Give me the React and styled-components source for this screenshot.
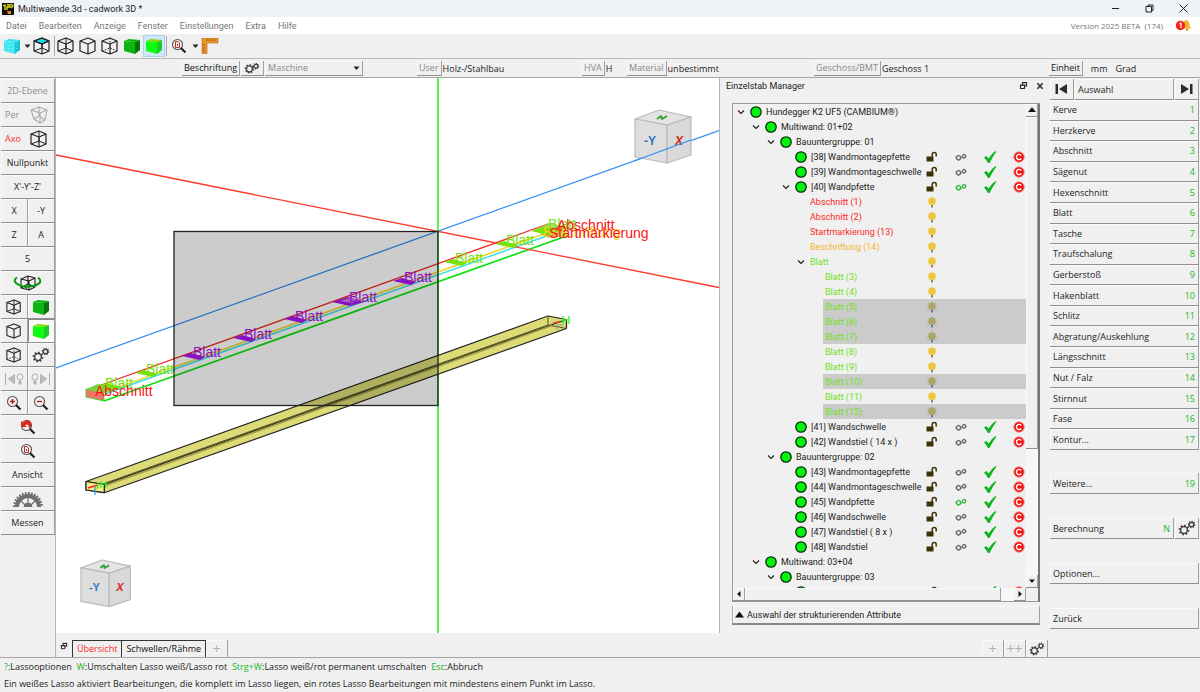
import React from 'react';
import styled, { createGlobalStyle, css } from 'styled-components';

const GREEN = '#12b81c';
const RED = '#fb2a1e';
const LIME = '#6fe01c';
const AMBER = '#f2b731';
const UI = '"Open Sans", "Noto Sans", sans-serif';
const NATIVE = 'Roboto, "Open Sans", sans-serif';

const Global = createGlobalStyle`
  * { box-sizing: border-box; }
  body { margin: 0; background: #f0f0f0; color: #1c1c1c; font: 9px/14px ${UI}; }
  button, select { font: inherit; color: inherit; margin: 0; padding: 0; border: 0; background: none; border-radius: 0; }
  ul { list-style: none; margin: 0; padding: 0; }
  svg { display: block; flex: none; }
  h2, p { margin: 0; font: inherit; }
`;

/* ---------- icons ---------- */

const box = 'M1 4 9 1l7 3v10l-7 3-8-3z';

const Cube = ({ kind = 'plain', size = 18, color = '#222' }) => (
  <svg width={size} height={size} viewBox="0 0 18 18" fill="none" stroke={color} strokeWidth="1.2" strokeLinejoin="round">
    {kind === 'top' && <path d="M1 4 9 1l7 3-7 3z" fill="#19d8ee" />}
    <path d={box} />
    <path d="M1 4l8 3 7-3M9 7v10" />
    {kind === 'wire' && <path d="M9 1v10M1 14l8-3 7 3" strokeWidth="1" />}
    {kind === 'top' && <path d="M9 7v4M1 14l8-3 7 3" strokeWidth="1" />}
    {kind === 'dash' && <path d="M9 1v10M1 14l8-3 7 3" strokeWidth="1" strokeDasharray="1.5 1.5" />}
  </svg>
);

const Perspective = () => (
  <svg width="18" height="18" viewBox="0 0 18 18" fill="none" stroke="#aaa" strokeWidth="1.1" strokeLinejoin="round">
    <path d="M1 4l8-3 8 3-2 10-5 3-6-4zM1 4l9 3 7-3M10 7v10M9 1v9M4 13l5-3 6 4" />
  </svg>
);

const Solid = ({ tone = 'light' }) => {
  const [top, front, side] = {
    light: ['#8fd800', '#0cff10', '#20c828'],
    dark: ['#0bb40f', '#0bb40f', '#087a0c'],
    cyan: ['#35e4ee', '#3fe6ef', '#16c3d6'],
  }[tone];
  return (
    <svg width="18" height="18" viewBox="0 0 18 18">
      <path d="M1 4l5-2 11 1-5 2z" fill={top} />
      <path d="M1 4l11 1v12L1 14z" fill={front} />
      <path d="M12 5l5-2v10l-5 4z" fill={side} />
      {tone === 'cyan' && <path d="M3 5v9M6 5v10M9 5v11M14 5v10" stroke="#8feff5" strokeDasharray="1 2" />}
      {tone === 'dark' && <path d="M13 7l4-2M13 10l4-2M13 13l4-2" stroke="#055a08" strokeDasharray="1 1" />}
    </svg>
  );
};

const teeth = (cx, cy, r) =>
  Array.from({ length: 8 }, (_, i) => {
    const a = (i * Math.PI) / 4 + 0.2;
    return `M${cx + r * Math.cos(a)} ${cy + r * Math.sin(a)}L${cx + (r + 1.8) * Math.cos(a)} ${cy + (r + 1.8) * Math.sin(a)}`;
  }).join('');

const Gears = ({ width = 18, height = 16, flat }) => (
  <svg width={width} height={height} viewBox="0 0 18 16" fill="none" stroke="#444">
    <circle cx="6" cy={flat ? 9 : 10} r="3.4" strokeWidth="1.5" />
    <path d={teeth(6, flat ? 9 : 10, 3.6)} strokeWidth="1.7" />
    <circle cx="13.5" cy={flat ? 6 : 4.5} r="2.2" strokeWidth="1.3" />
    <path d={teeth(13.5, flat ? 6 : 4.5, 2)} strokeWidth="1.3" />
  </svg>
);

const Lens = ({ kind }) => (
  <svg width="16" height="16" viewBox="0 0 16 16" fill="none">
    <circle cx="6.5" cy="6.5" r="5" fill="#f6eeee" stroke="#555" strokeWidth="1.1" />
    <path d="M10 10l4.5 4.5" stroke="#222" strokeWidth="2.2" />
    {kind === 'plus' && <path d="M4 6.5h5M6.5 4v5" stroke="#a22" strokeWidth="1.4" />}
    {kind === 'minus' && <path d="M4 6.5h5" stroke="#a22" strokeWidth="1.4" />}
    {kind === 'page' && <path d="M4.500 3.500h2.500l1.500 1.500v4.500h-4zM6.500 6v2" stroke="#b2332b" />}
    {kind === 'back' && <path d="M1 2v6h6L5 6.300q4-2.500 4 4.200 4-5 1-8.500-3-2.500-7 1.800z" fill="#d8291c" />}
  </svg>
);

const Caret = () => (
  <svg width="7" height="5" viewBox="0 0 7 5"><path d="M.5.5h6l-3 3.500z" fill="#222" /></svg>
);

const Ruler = () => (
  <svg width="18" height="16" viewBox="0 0 18 16">
    <path d="M1 0h16v5H6v11H1z" fill="#e8962a" stroke="#b06a14" strokeWidth=".6" />
    <path d="M6 1v2M8.500 1v2M11 1v2M13.500 1v2M2 7h2M2 10h2M2 13h2" stroke="#7a4708" strokeWidth=".8" />
  </svg>
);

const Rotate = () => (
  <svg width="30" height="18" viewBox="0 0 30 18" fill="none">
    <g stroke="#222" strokeWidth="1.1" strokeLinejoin="round">
      <path d="M8 5l7-3 7 2v9l-6 3-8-2zM8 5l8 2 6-3M16 7v9M15 2v8l-7 4M15 10l7 3" />
    </g>
    <path d="M4 3.500Q0 6 3 9q5 4 12 3.500 8 0 12-4 1-3-2-5" stroke="#0b9a14" strokeWidth="2" />
    <path d="M14 9.500l-4 3 4.500 3z" fill="#0b9a14" />
  </svg>
);

const Step = ({ flip }) => (
  <svg width="20" height="14" viewBox="0 0 20 14" fill="#bdbdbd" stroke="#b0b0b0">
    {flip ? (
      <>
        <circle cx="4" cy="5" r="3" fill="none" /><path d="M3 9h2v3H3z" />
        <path d="M9.500 2.500l6 4.500-6 4.500z" /><path d="M18.500 1v12" />
      </>
    ) : (
      <>
        <path d="M1.500 1v12" /><path d="M10.500 2.500l-6 4.500 6 4.500z" />
        <circle cx="16" cy="5" r="3" fill="none" /><path d="M15 9h2v3h-2z" />
      </>
    )}
  </svg>
);

const Saw = () => {
  const t = Array.from({ length: 15 }, (_, i) => {
    const a = Math.PI + (i * Math.PI) / 14;
    return `M${16 + 11 * Math.cos(a)} ${16 + 11 * Math.sin(a)}L${16 + 15 * Math.cos(a + 0.08)} ${16 + 15 * Math.sin(a + 0.08)}`;
  }).join('');
  return (
    <svg width="32" height="16" viewBox="0 0 32 16" fill="none" stroke="#707070">
      <path d="M5 16a11 11 0 0 1 22 0" strokeWidth="4" />
      <path d={t} strokeWidth="1.800" />
      <path d="M16 14V5M14 15L8 9M18 15l6-6" strokeWidth="1.200" />
      <path d="M12 16a4 4 0 0 1 8 0z" fill="#707070" />
    </svg>
  );
};

const Skip = ({ flip }) => (
  <svg width="13" height="12" viewBox="0 0 13 12" fill="#2d2d2d">
    {flip ? <path d="M1 1l8 5-8 5zM10 1h2.500v10H10z" /> : <path d="M12 1L4 6l8 5zM.5 1H3v10H.5z" />}
  </svg>
);

const WindowIcon = ({ kind, size = 9 }) => (
  <svg width={size} height={size} viewBox="0 0 9 9" fill="none" stroke="#222">
    {kind === 'min' && <path d="M1 4.500h7" />}
    {kind === 'max' && <path d="M1 2.500h5.500V8H1zM3 2.500V1h5v5.500H6.500" />}
    {kind === 'close' && <path d="M.5.5l8 8M8.500.5l-8 8" />}
    {kind === 'float' && <path d="M1.500 4h4v3.500h-4zM1 4.200h5M3.500 4V1.500h4V5H6M3 1.700h5" strokeWidth="1.100" />}
    {kind === 'x' && <path d="M1.500 1.500l6 6M7.500 1.500l-6 6" strokeWidth="1.600" />}
  </svg>
);

const AppLogo = () => (
  <svg width="12" height="12" viewBox="0 0 12 12">
    <path d="M0 0h12v12H0z" fill="#14140c" />
    <path d="M1 3l2-1v5M5 2h3v2H5v3M9 1l2 2-2 2" stroke="#dfe01a" strokeWidth="1.300" fill="none" />
    <path d="M5 8h4v3H6z" fill="#e9822c" />
  </svg>
);

const Bell = () => (
  <svg width="18" height="13" viewBox="0 0 18 13">
    <path d="M11 1q4 1 3.500 6l2 2.500H9V2z" fill="#f0b52c" /><circle cx="12" cy="10.500" r="1.300" fill="#d99a1c" />
    <circle cx="5.500" cy="6.500" r="4.700" fill="#f1251c" />
    <path d="M4.500 5l1.500-1v5" stroke="#fff" fill="none" strokeWidth="1.200" />
  </svg>
);

const Chevron = () => (
  <svg width="8" height="8" viewBox="0 0 8 8" fill="none"><path d="M1 2.500l3 3 3-3" stroke="#222" strokeWidth="1.200" /></svg>
);

const Dot = () => (
  <svg width="12" height="12" viewBox="0 0 12 12"><circle cx="6" cy="6" r="5.200" fill="#00f50a" stroke="#0b2b0b" strokeWidth="1.300" /></svg>
);

const Lock = () => (
  <svg width="14" height="14" viewBox="0 0 14 14">
    <path d="M1.500 6.500h7v5h-7z" fill="#3b3306" />
    <path d="M7.200 7V4.500q0-2 2-2t2 2V6.500" fill="none" stroke="#3b3306" strokeWidth="1.500" />
  </svg>
);

const Links = ({ color }) => (
  <svg width="14" height="14" viewBox="0 0 14 14" fill="none" stroke={color} strokeWidth="1.300">
    <circle cx="4.500" cy="7.800" r="2.100" /><circle cx="10" cy="6.300" r="1.700" />
    <path d="M1.300 7.800h1M4.500 10v1M4.500 4.700v1M6.700 8.500l1.300-.8M11.700 6.300h.8M10 3.700v1" strokeWidth=".8" />
  </svg>
);

const Check = () => (
  <svg width="14" height="14" viewBox="0 0 14 14"><path d="M1 7.500l2.300-1.500 2.400 2.500Q8 4 12.500 1l.8.8Q9.500 7 6.500 13H5Q3.500 10 1 7.500z" fill="#0fb51c" /></svg>
);

const Copy = () => (
  <svg width="14" height="14" viewBox="0 0 14 14" fill="none">
    <circle cx="7" cy="7" r="5.300" fill="#f51414" stroke="#fb9a9a" strokeWidth=".8" />
    <path d="M9.200 5.500a2.600 2.600 0 1 0 0 3" stroke="#fff" strokeWidth="1.400" />
  </svg>
);

const Bulb = ({ off }) => (
  <svg width="14" height="14" viewBox="0 0 14 14">
    <path d="M7 1v11M2 6.500h10M3 2.500l8 8M11 2.500l-8 8" stroke={off ? '#b0a88a' : '#f5d998'} />
    <circle cx="7" cy="6.300" r="3.700" fill={off ? '#aba76a' : '#ecc63c'} />
    <path d="M6 10h2v2.500H6z" fill={off ? '#6474a8' : '#8a8578'} />
  </svg>
);

/* ---------- frame ---------- */

const Page = styled.div`
  display: flex;
  flex-direction: column;
  height: 100vh;
  min-height: 640px;
`;

const TitleBar = styled.header`
  display: flex;
  align-items: center;
  gap: 4px;
  height: 17px;
  padding: 0 2px 0 2px;
  background: #eef3f7;
  font-family: ${NATIVE};
  span { flex: 1; }
`;

const WindowButton = styled.button`
  display: grid;
  place-items: center;
  width: 30px;
  height: 16px;
`;

const MenuBar = styled.nav`
  display: flex;
  align-items: center;
  gap: 12px;
  height: 17px;
  padding: 0 7px 0 6px;
  background: #fff;
  color: #777;
  font-family: ${NATIVE};
`;

const MenuButton = styled.button``;

const Version = styled.span`
  margin-left: auto;
  font-family: ${UI};
  font-size: 8px;
`;

const ToolBar = styled.div`
  display: flex;
  align-items: center;
  height: 25px;
  padding-left: 1px;
  border-bottom: 1px solid #b9b9b9;
`;

const Tool = styled.button`
  display: grid;
  place-items: center;
  width: ${(p) => (p.$narrow ? 8 : p.$wide ? 24 : 22)}px;
  height: 22px;
  ${(p) => p.$on && css`background: #cde8fa; box-shadow: inset 0 0 0 1px #a8d4f2;`}
`;

const Divider = styled.i`
  width: 1px;
  height: 20px;
  margin-left: 1px;
  background: #aaa;
`;

const Attributes = styled.div`
  display: grid;
  grid-template-columns: 182fr 235fr 165fr 45fr 187fr 235fr 151fr;
  align-items: center;
  height: 19px;
  padding-top: 1px;
  border-bottom: 1px solid #a5a5a5;
`;

const Attribute = styled.div`
  display: flex;
  align-items: center;
  gap: ${(p) => p.$gap || 1}px;
  white-space: nowrap;
`;

const raised = css`
  border-right: 1px solid #a0a0a0;
  border-bottom: 1px solid #909090;
  box-shadow: inset 1px 1px #f9f9f9;
`;

const Chip = styled.button`
  ${raised}
  display: grid;
  place-items: center;
  height: 15px;
  padding: 0 2px;
  color: ${(p) => (p.$dim ? '#8b8b8b' : '#111')};
`;

const SelectBox = styled.div`
  position: relative;
  width: 98px;
  svg { position: absolute; right: 3px; top: 5px; pointer-events: none; }
`;

const Select = styled.select`
  ${raised}
  appearance: none;
  width: 100%;
  height: 15px;
  padding-left: 3px;
  color: #8b8b8b;
`;

const Main = styled.main`
  display: flex;
  flex: 1;
  min-height: 0;
  border-bottom: 1px solid #a5a5a5;
`;

const Center = styled.div`
  display: flex;
  flex-direction: column;
  flex: 1;
  min-width: 0;
`;

const Work = styled.div`
  display: flex;
  flex: 1;
  min-height: 0;
`;

/* ---------- left tools ---------- */

const Side = styled.aside`
  display: grid;
  grid-template-columns: 27px 27px;
  grid-auto-rows: 24px;
  width: 56px;
  padding: 1px 1px 0;
  border-right: 1px solid #b5b5b5;
`;

const SideButton = styled.button`
  ${raised}
  display: flex;
  align-items: center;
  justify-content: ${(p) => (p.$spread ? 'space-between' : 'center')};
  ${(p) => p.$wide && css`grid-column: span 2;`}
  ${(p) => p.$spread && css`padding: 0 6px 0 4px;`}
  ${(p) => p.$on && css`background: #fafafa; box-shadow: inset 1px 1px #888;`}
  color: ${(p) => p.$color || '#222'};
`;

/* ---------- scene ---------- */

const Scene = styled.div`
  flex: 1;
  min-width: 0;
  overflow: hidden;
  background: #fff;
  border-right: 1px solid #b5b5b5;
  svg { width: 100%; height: 100%; }
`;

const Label3D = styled.text`
  font: 14px "Liberation Sans", Arial, sans-serif;
`;

const AxisLabel = styled.text`
  font-family: "Liberation Sans Narrow", "Liberation Sans", sans-serif;
  font-weight: 700;
  stroke: none;
`;

const PURPLE = '#8a10c4';
const TAG = '#77e010';

const tags = [
  [98, 386, TAG], [135, 373, TAG], [182, 356, PURPLE], [233, 338, PURPLE], [284, 319, PURPLE],
  [332, 302, PURPLE, true], [393, 281, PURPLE], [444, 262, TAG], [495, 244, TAG], [531, 231, TAG, true],
];

const labels = [
  [105, 388, TAG], [146, 374, TAG], [193, 357, PURPLE], [244, 339, PURPLE], [295, 321, PURPLE],
  [349, 302, PURPLE], [404, 282, PURPLE], [455, 263, TAG], [506, 245, TAG], [548, 229, TAG],
];

const ViewCube = ({ x, y, s }) => {
  const p = (list) => list.map(([a, b]) => `${x + a * s},${y + b * s}`).join(' ');
  return (
    <g stroke="#b9b9b9" strokeWidth="1.200" strokeLinejoin="round">
      <polygon points={p([[0, 9], [24, 0], [56, 7], [32, 15]])} fill="#e4e4e4" />
      <polygon points={p([[0, 9], [32, 15], [32, 53], [0, 47]])} fill="#dedede" />
      <polygon points={p([[32, 15], [56, 7], [56, 45], [32, 53]])} fill="#d9d9d9" />
      <polyline points={p([[22, 9], [26, 6], [27, 9], [32, 6]])} fill="none" stroke="#3ba03b" strokeWidth="2" />
      <AxisLabel x={x + 9 * s} y={y + 35 * s} fontSize={Math.round(12 * s)} fill="#2f78c4">-Y</AxisLabel>
      <AxisLabel x={x + 40 * s} y={y + 35 * s} fontSize={Math.round(12 * s)} fontStyle="italic" fill="#d0281c">X</AxisLabel>
    </g>
  );
};

const SceneView = () => (
  <Scene>
    <svg viewBox="56 78 663 555" preserveAspectRatio="xMinYMin slice" role="img" aria-label="3D-Ansicht">
      <path d="M438 78v560" stroke="#3cf53c" strokeWidth="1.800" />
      <g strokeLinejoin="round">
        <path d="M86 481.500L548 316l18.500 3.500v9L104.300 492.700 86 490z" fill="#dcdb78" stroke="#222" strokeWidth="1.200" />
        <path d="M86 490l462-165 18.500 3.500M548 316v9" stroke="#55552a" fill="none" strokeWidth="1" />
        <path d="M104.300 484.500L566.500 319.500M86 481.500l18.300 3v8" stroke="#222" fill="none" strokeWidth="1.200" />
        <path d="M100 487.500L552 325.500" stroke="#a09e42" strokeWidth="1.600" />
        <path d="M86 481.500l18.300 3v8.200L86 490z" fill="#f1ed8c" stroke="#222" strokeWidth="1.200" />
        <path d="M88 488l10-3" stroke="#fb2a1e" strokeWidth="1.500" />
        <path d="M95 487v8" stroke="#2a8df5" strokeWidth="1.200" />
        <path d="M98 483v5h-3M101 481v7M106 481v7M101 484h5" stroke="#2cf52c" strokeWidth="1.200" fill="none" />
        <path d="M563 316v8M569 316v8M563 320h6" stroke="#2cf52c" strokeWidth="1.300" />
        <path d="M553 323l7-1.500" stroke="#f0501e" strokeWidth="1.500" />
        <path d="M557 325v5M557 325h6" stroke="#999" />
      </g>
      <path d="M86 390.500L548 224" stroke="#f02a1e" strokeWidth="1.300" />
      <path d="M105 392L545 233.500" stroke="#f0d838" strokeWidth="1.800" />
      <path d="M105 394L548 235.500" stroke="#30e0ea" strokeWidth="1.400" />
      <path d="M104 401L568 235.500" stroke="#0ce010" strokeWidth="1.700" />
      <path d="M56 155L719 287.500" stroke="#fb3a2a" strokeWidth="1.300" />
      <path d="M56 368L719 130.500" stroke="#2f8ff0" strokeWidth="1.300" />
      <rect x="174" y="231.500" width="264" height="174" fill="#000" fillOpacity=".2" stroke="#222" strokeWidth="1.300" />
      <path d="M86 389l18 4v8l-18-4z" fill="#f2716b" stroke="#3adf22" />
      <path d="M86 389l12-5 24 3-12 5-8 1z" fill="#83cf3a" />
      <path d="M534 230l14-7 18 4v9l-18 2z" fill="#7fd82a" opacity=".7" />
      <path d="M544 235l14-9 6 2-8 9z" fill="#f2716b" />
      {tags.map(([x, y, color, big]) => (
        <polygon
          key={x}
          points={big
            ? `${x},${y} ${x + 16},${y - 5} ${x + 32},${y} ${x + 18},${y + 4}`
            : `${x},${y} ${x + 9},${y - 3} ${x + 23},${y + 1} ${x + 18},${y + 4}`}
          fill={color}
        />
      ))}
      <path d="M340 301l10-3 8 3-6 2z" fill="#a463c4" />
      <Label3D x="543" y="237" fill="#f5d41c">Beschriftung</Label3D>
      {labels.map(([x, y, color]) => <Label3D key={x} x={x} y={y} fill={color}>Blatt</Label3D>)}
      <Label3D x="95" y="396" fill="#fb1414">Abschnitt</Label3D>
      <Label3D x="557" y="230" fill="#fb1414">Abschnitt</Label3D>
      <Label3D x="549" y="238" fill="#fb1414">Startmarkierung</Label3D>
      <ViewCube x={635} y={110} s={1} />
      <ViewCube x={81} y={560} s={0.88} />
      <path d="M634 161l57-21" stroke="#2f8ff0" strokeWidth="1.300" />
    </svg>
  </Scene>
);

/* ---------- manager ---------- */

const Manager = styled.section`
  display: flex;
  flex-direction: column;
  width: 328px;
  padding: 0 8px 8px 12px;
  font-family: ${NATIVE};
`;

const ManagerHead = styled.div`
  display: flex;
  align-items: center;
  gap: 8px;
  height: 25px;
  margin: 0 -4px 0 -6px;
  padding-bottom: 10px;
  h2 { flex: 1; }
`;

const IconButton = styled.button`
  display: grid;
  place-items: center;
  height: 14px;
`;

const TreeFrame = styled.div`
  display: grid;
  grid-template-columns: 1fr 12px;
  grid-template-rows: minmax(0, 1fr) 13px;
  flex: 1;
  min-height: 0;
  border: 1px solid #999;
  border-right: 2px solid #777;
`;

const Tree = styled.ul`
  overflow: hidden;
`;

const TreeRow = styled.li`
  display: flex;
  height: 15px;
  margin-left: ${(p) => p.$level * 15}px;
  color: ${(p) => p.$color || '#222'};
`;

const Twist = styled.span`
  display: grid;
  place-items: center;
  width: 15px;
`;

const RowBody = styled.span`
  display: flex;
  flex: 1;
  align-items: center;
  min-width: 0;
  padding-left: 2px;
  white-space: nowrap;
  background: ${(p) => (p.$on ? '#cbcbcb' : 'transparent')};
`;

const RowLabel = styled.span`
  flex: 1;
  min-width: 0;
  margin-left: ${(p) => (p.$dot ? 4 : 0)}px;
`;

const Marks = styled.span`
  display: grid;
  grid-template-columns: repeat(4, 14px);
  gap: 15px;
`;

const VScroll = styled.div`
  display: flex;
  flex-direction: column;
  background: #f7f7f7;
`;

const HScroll = styled.div`
  display: flex;
  background: #f7f7f7;
`;

const ScrollButton = styled.button`
  ${raised}
  display: grid;
  place-items: center;
  flex: none;
  width: 12px;
  height: 13px;
  background: #f0f0f0;
`;

const Thumb = styled.i`
  ${raised}
  flex: ${(p) => p.$size};
  background: #f0f0f0;
`;

const Track = styled.i`
  flex: ${(p) => p.$size};
`;

const Attr = styled.button`
  ${raised}
  display: flex;
  align-items: center;
  gap: 3px;
  height: 19px;
  margin-top: 4px;
  padding-left: 2px;
  border-left: 1px solid #aaa;
  border-bottom: 2px solid #888;
`;

const Arrow = ({ d, size = 6 }) => (
  <svg width={size} height={size} viewBox="0 0 6 6"><path d={d} fill="#111" /></svg>
);

const part = (text, tint = '#666') => ({ level: 3, text, dot: true, tint });
const leaf = (n, on) => ({ level: 5, text: `Blatt (${n})`, color: LIME, bulb: true, on });

const rows = [
  { level: 0, text: 'Hundegger K2 UF5 (CAMBIUM®)', dot: true, open: true },
  { level: 1, text: 'Multiwand: 01+02', dot: true, open: true },
  { level: 2, text: 'Bauuntergruppe: 01', dot: true, open: true },
  part('[38] Wandmontagepfette'),
  part('[39] Wandmontageschwelle'),
  { ...part('[40] Wandpfette', '#2cb838'), open: true },
  { level: 4, text: 'Abschnitt (1)', color: RED, bulb: true },
  { level: 4, text: 'Abschnitt (2)', color: RED, bulb: true },
  { level: 4, text: 'Startmarkierung (13)', color: RED, bulb: true },
  { level: 4, text: 'Beschriftung (14)', color: AMBER, bulb: true },
  { level: 4, text: 'Blatt', color: LIME, bulb: true, open: true },
  leaf(3), leaf(4), leaf(5, true), leaf(6, true), leaf(7, true), leaf(8), leaf(9), leaf(10, true), leaf(11), leaf(12, true),
  part('[41] Wandschwelle'),
  part('[42] Wandstiel ( 14 x )'),
  { level: 2, text: 'Bauuntergruppe: 02', dot: true, open: true },
  part('[43] Wandmontagepfette'),
  part('[44] Wandmontageschwelle'),
  part('[45] Wandpfette', '#2cb838'),
  part('[46] Wandschwelle'),
  part('[47] Wandstiel ( 8 x )'),
  part('[48] Wandstiel'),
  { level: 1, text: 'Multiwand: 03+04', dot: true, open: true },
  { level: 2, text: 'Bauuntergruppe: 03', dot: true, open: true },
  part('[49] Wandmontagepfette'),
];

const ManagerPanel = () => (
  <Manager>
    <ManagerHead>
      <h2>Einzelstab Manager</h2>
      <IconButton aria-label="Lösen"><WindowIcon kind="float" /></IconButton>
      <IconButton aria-label="Schließen"><WindowIcon kind="x" size={8} /></IconButton>
    </ManagerHead>
    <TreeFrame>
      <Tree>
        {rows.map((r) => (
          <TreeRow key={r.text} $level={r.level} $color={r.color}>
            <Twist>{r.open && <Chevron />}</Twist>
            <RowBody $on={r.on}>
              {r.dot && <Dot />}
              <RowLabel $dot={r.dot}>{r.text}</RowLabel>
              {(r.tint || r.bulb) && (
                <Marks>
                  {r.bulb ? <Bulb off={r.on} /> : <><Lock /><Links color={r.tint} /><Check /><Copy /></>}
                </Marks>
              )}
            </RowBody>
          </TreeRow>
        ))}
      </Tree>
      <VScroll>
        <ScrollButton aria-label="Nach oben"><Arrow d="M0 4.500h6L3 1z" size={8} /></ScrollButton>
        <Thumb $size={332} />
        <Track $size={127} />
        <ScrollButton aria-label="Nach unten"><Arrow d="M0 1.500h6L3 5z" /></ScrollButton>
      </VScroll>
      <HScroll>
        <ScrollButton aria-label="Nach links"><Arrow d="M4.500 0v6L1 3z" /></ScrollButton>
        <Thumb $size={256} />
        <Track $size={13} />
        <ScrollButton aria-label="Nach rechts"><Arrow d="M1.500 0v6L5 3z" /></ScrollButton>
      </HScroll>
      <i />
    </TreeFrame>
    <Attr><Arrow d="M0 5h6L3 1z" size={9} />Auswahl der strukturierenden Attribute</Attr>
  </Manager>
);

/* ---------- tabs ---------- */

const Tabs = styled.div`
  display: flex;
  align-items: flex-end;
  height: 24px;
  padding: 0 0 0 3px;
`;

const Tab = styled.button`
  height: 17px;
  padding: 0 4px;
  border: 1px solid #333;
  border-width: 1px 1px 0;
  margin-left: -1px;
  white-space: nowrap;
  color: ${(p) => (p.$on ? RED : '#111')};
`;

const TabTool = styled.button`
  ${raised}
  display: grid;
  place-items: center;
  width: 22px;
  height: 17px;
  color: #b0b0b0;
  font-size: 14px;
  border-bottom: 0;
  ${(p) => p.$end && css`margin-left: auto;`}
`;

const TabFloat = styled.span`
  width: 14px;
  align-self: flex-start;
  padding: 9px 0 0 1px;
`;

/* ---------- right menu ---------- */

const Commands = styled.aside`
  display: flex;
  flex-direction: column;
  width: 152px;
  padding: 1px 1px 0 2px;
`;

const Row = styled.div`
  display: flex;
  gap: 1px;
  height: 21px;
`;

const CommandButton = styled.button`
  ${raised}
  display: flex;
  align-items: center;
  flex: 1;
  min-height: 0;
  padding: 1px 3px 0;
  text-align: left;
`;

const Square = styled(CommandButton)`
  flex: none;
  width: 24px;
  justify-content: center;
  padding: 0;
`;

const Key = styled.span`
  margin-left: auto;
  color: ${GREEN};
`;

const Steps = styled.div`
  display: grid;
  grid-auto-rows: 1fr;
  height: 350px;
`;

const Extras = styled.div`
  display: flex;
  flex-direction: column;
  gap: 24px;
  margin-top: 23px;
`;

const commands = ['Kerve', 'Herzkerve', 'Abschnitt', 'Sägenut', 'Hexenschnitt', 'Blatt', 'Tasche', 'Traufschalung', 'Gerberstoß', 'Hakenblatt', 'Schlitz', 'Abgratung/Auskehlung', 'Längsschnitt', 'Nut / Falz', 'Stirnnut', 'Fase', 'Kontur...'];

/* ---------- status ---------- */

const Status = styled.footer`
  height: 34px;
  padding: 0 4px;
  p { height: 17px; line-height: 17px; white-space: pre; }
  b { font-weight: 400; color: ${GREEN}; }
`;

export default function App() {
  return (
    <Page>
      <Global />
      <TitleBar>
        <AppLogo />
        <span>Multiwaende.3d - cadwork 3D *</span>
        <WindowButton aria-label="Minimieren"><WindowIcon kind="min" /></WindowButton>
        <WindowButton aria-label="Wiederherstellen"><WindowIcon kind="max" /></WindowButton>
        <WindowButton aria-label="Schließen"><WindowIcon kind="close" /></WindowButton>
      </TitleBar>
      <MenuBar>
        {['Datei', 'Bearbeiten', 'Anzeige', 'Fenster', 'Einstellungen', 'Extra', 'Hilfe'].map((m) => <MenuButton key={m}>{m}</MenuButton>)}
        <Version>Version 2025 BETA&nbsp; (174)</Version>
        <Bell />
      </MenuBar>
      <ToolBar>
        <Tool aria-label="Volumen"><Solid tone="cyan" /></Tool>
        <Tool $narrow aria-label="Mehr"><Caret /></Tool>
        <Tool aria-label="Deckfläche"><Cube kind="top" /></Tool>
        <Divider />
        <Tool aria-label="Drahtmodell"><Cube kind="wire" /></Tool>
        <Tool aria-label="Verdeckt"><Cube /></Tool>
        <Tool aria-label="Gestrichelt"><Cube kind="dash" /></Tool>
        <Tool aria-label="Schattiert"><Solid tone="dark" /></Tool>
        <Tool $on aria-label="Flächen"><Solid /></Tool>
        <Divider />
        <Tool $wide aria-label="Zoom"><Lens kind="page" /></Tool>
        <Tool $narrow aria-label="Zoomoptionen"><Caret /></Tool>
        <Tool aria-label="Messen"><Ruler /></Tool>
      </ToolBar>
      <Attributes>
        <i />
        <Attribute>
          <Chip>Beschriftung</Chip>
          <Chip aria-label="Optionen"><Gears flat height={14} /></Chip>
          <SelectBox>
            <Select aria-label="Maschine" defaultValue="m"><option value="m">Maschine</option></Select>
            <Caret />
          </SelectBox>
        </Attribute>
        <Attribute><Chip $dim>User</Chip>Holz-/Stahlbau</Attribute>
        <Attribute><Chip $dim>HVA</Chip>H</Attribute>
        <Attribute><Chip $dim>Material</Chip>unbestimmt</Attribute>
        <Attribute><Chip $dim>Geschoss/BMT</Chip>Geschoss 1</Attribute>
        <Attribute $gap={8}><Chip>Einheit</Chip><span>mm</span><span>Grad</span></Attribute>
      </Attributes>
      <Main>
        <Side>
          <SideButton $wide $color="#8f8f8f">2D-Ebene</SideButton>
          <SideButton $wide $spread $color="#8f8f8f">Per<Perspective /></SideButton>
          <SideButton $wide $spread $color={RED}>Axo<Cube kind="wire" /></SideButton>
          <SideButton $wide>Nullpunkt</SideButton>
          <SideButton $wide>X'-Y'-Z'</SideButton>
          <SideButton>X</SideButton>
          <SideButton>-Y</SideButton>
          <SideButton>Z</SideButton>
          <SideButton>A</SideButton>
          <SideButton $wide>5</SideButton>
          <SideButton $wide aria-label="Drehen"><Rotate /></SideButton>
          <SideButton aria-label="Drahtmodell"><Cube kind="wire" size={16} /></SideButton>
          <SideButton aria-label="Schattiert"><Solid tone="dark" /></SideButton>
          <SideButton aria-label="Verdeckt"><Cube size={16} /></SideButton>
          <SideButton $on aria-label="Flächen"><Solid /></SideButton>
          <SideButton aria-label="Gestrichelt"><Cube kind="dash" size={16} /></SideButton>
          <SideButton aria-label="Optionen"><Gears /></SideButton>
          <SideButton aria-label="Vorherige"><Step /></SideButton>
          <SideButton aria-label="Nächste"><Step flip /></SideButton>
          <SideButton aria-label="Vergrößern"><Lens kind="plus" /></SideButton>
          <SideButton aria-label="Verkleinern"><Lens kind="minus" /></SideButton>
          <SideButton $wide aria-label="Zoom zurück"><Lens kind="back" /></SideButton>
          <SideButton $wide aria-label="Alles zeigen"><Lens kind="page" /></SideButton>
          <SideButton $wide>Ansicht</SideButton>
          <SideButton $wide aria-label="Säge"><Saw /></SideButton>
          <SideButton $wide>Messen</SideButton>
        </Side>
        <Center>
          <Work>
            <SceneView />
            <ManagerPanel />
          </Work>
          <Tabs>
            <TabFloat><WindowIcon kind="float" size={8} /></TabFloat>
            <Tab $on>Übersicht</Tab>
            <Tab>Schwellen/Rähme</Tab>
            <TabTool>+</TabTool>
            <TabTool $end>+</TabTool>
            <TabTool>++</TabTool>
            <TabTool aria-label="Optionen"><Gears height={14} /></TabTool>
          </Tabs>
        </Center>
        <Commands>
          <Row>
            <Square aria-label="Anfang"><Skip /></Square>
            <CommandButton>Auswahl</CommandButton>
            <Square aria-label="Ende"><Skip flip /></Square>
          </Row>
          <Steps>
            {commands.map((c, i) => <CommandButton key={c}>{c}<Key>{i + 1}</Key></CommandButton>)}
          </Steps>
          <Extras>
            <Row><CommandButton>Weitere...<Key>19</Key></CommandButton></Row>
            <Row>
              <CommandButton>Berechnung<Key>N</Key></CommandButton>
              <Square aria-label="Berechnungsoptionen"><Gears /></Square>
            </Row>
            <Row><CommandButton>Optionen...</CommandButton></Row>
            <Row><CommandButton>Zurück</CommandButton></Row>
          </Extras>
        </Commands>
      </Main>
      <Status>
        <p><b>?</b>:Lassooptionen{'  '}<b>W</b>:Umschalten Lasso weiß/Lasso rot{'  '}<b>Strg+W</b>:Lasso weiß/rot permanent umschalten{'  '}<b>Esc</b>:Abbruch</p>
        <p>Ein weißes Lasso aktiviert Bearbeitungen, die komplett im Lasso liegen, ein rotes Lasso Bearbeitungen mit mindestens einem Punkt im Lasso.</p>
      </Status>
    </Page>
  );
}
